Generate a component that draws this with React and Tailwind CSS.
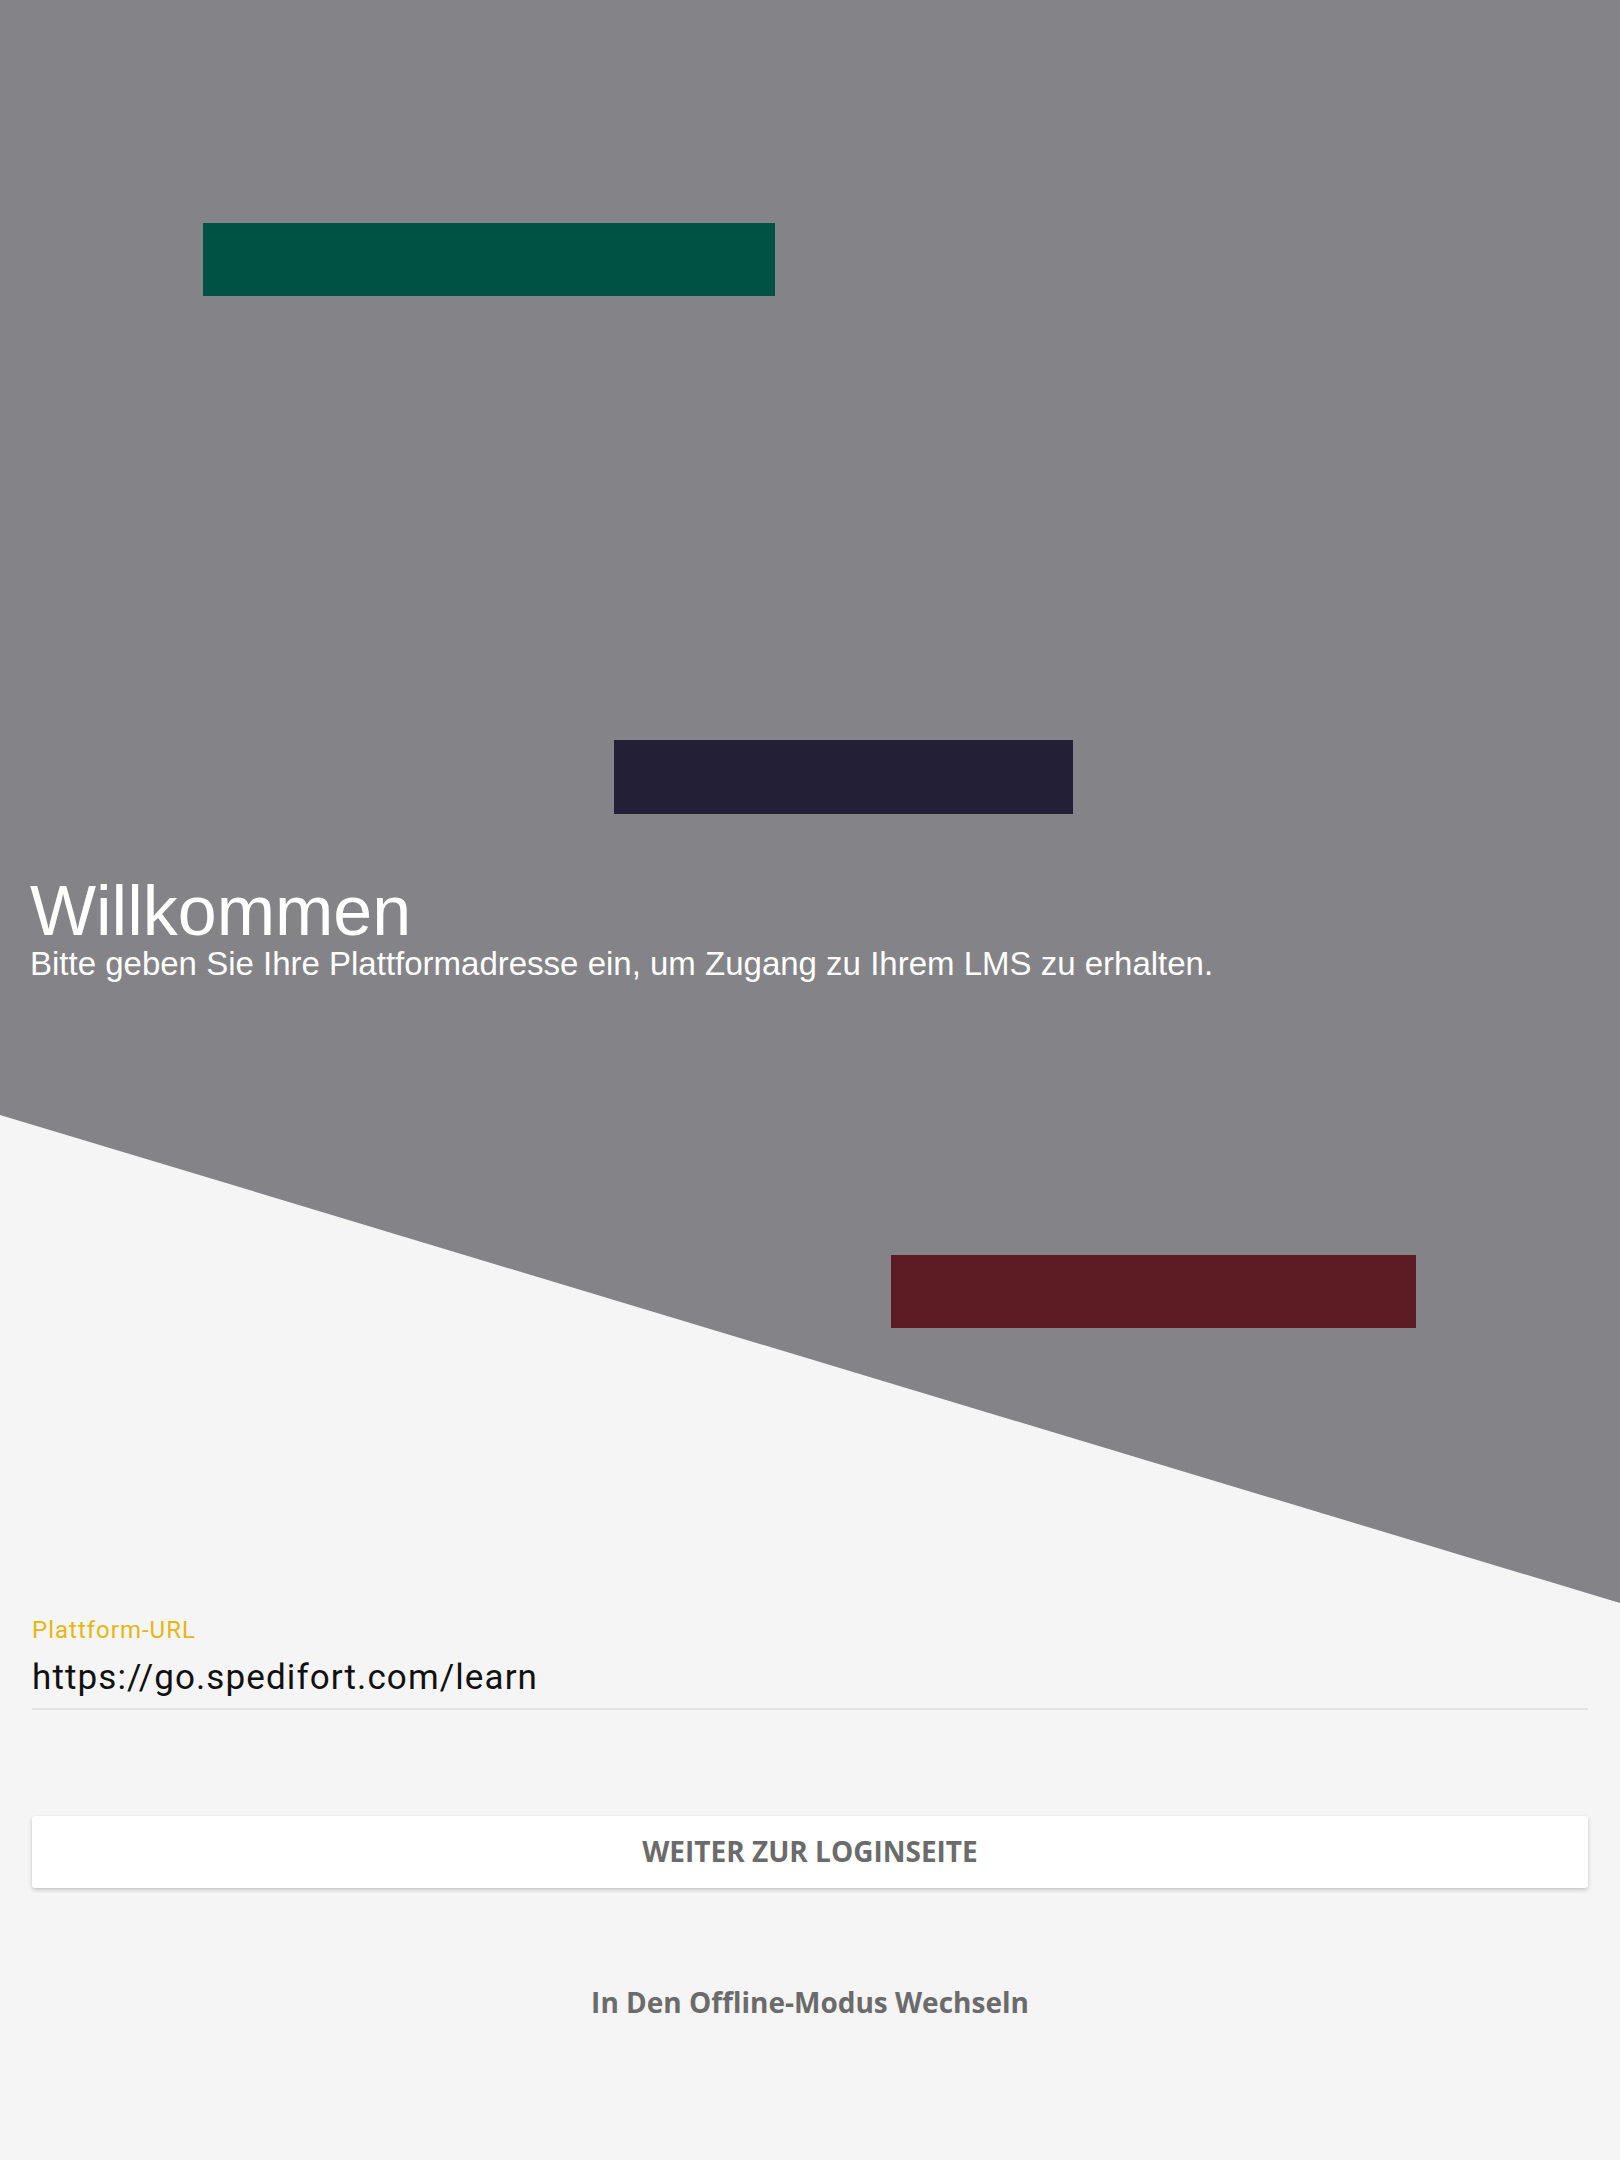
export default function App() {
  return (
    <div className="min-h-[2160px] w-full bg-[#f5f5f5]" style={{ fontFamily: '"Liberation Sans", Arial, sans-serif' }}>
      <div className="relative h-[1603px] w-full">
        <div
          className="absolute inset-0 bg-[#848387]"
          style={{ clipPath: 'polygon(0 0, 100% 0, 100% 1603px, 0 1115px)' }}
        />
        <div className="relative flex flex-col pt-[223px]">
          <div className="ml-[203px] h-[73px] w-[572px] bg-[#005244]" />
          <div className="ml-[614px] mt-[444px] h-[74px] w-[459px] bg-[#231f36]" />
          <div className="mt-[62px] pl-[30px] text-white">
            <h1 className="text-[70px] leading-[70px] font-normal">Willkommen</h1>
            <p className="mt-[1px] text-[33px] leading-[33px]">
              Bitte geben Sie Ihre Plattformadresse ein, um Zugang zu Ihrem LMS zu erhalten.
            </p>
          </div>
          <div className="ml-[891px] mt-[275px] h-[73px] w-[525px] bg-[#5b1d23]" />
        </div>
      </div>
      <div className="flex flex-col px-[32px]">
        <label
          className="mt-[15px] text-[24px] leading-[24px] tracking-[1px] text-[#e6b713]"
          style={{ fontFamily: 'Roboto, sans-serif' }}
        >
          Plattform-URL
        </label>
        <div
          className="mt-[18px] border-b-2 border-[#e3e3e3] pb-[13px] text-[35px] leading-[35px] tracking-[1.1px] text-[#111]"
          style={{ fontFamily: 'Roboto, sans-serif' }}
        >
          https://go.spedifort.com/learn
        </div>
        <button
          className="mt-[106px] flex h-[72px] w-full items-center justify-center rounded-[3px] bg-white text-[28px] font-bold text-[#6b6b6b] shadow-[0_2px_4px_rgba(0,0,0,0.2)]"
          style={{ fontFamily: '"Open Sans", sans-serif' }}
        >
          <span className="-mt-[2px]">WEITER ZUR LOGINSEITE</span>
        </button>
        <div
          className="mt-[100px] text-center text-[28px] leading-[29px] font-bold text-[#6b6b6b]"
          style={{ fontFamily: '"Open Sans", sans-serif' }}
        >
          In Den Offline-Modus Wechseln
        </div>
      </div>
    </div>
  );
}
